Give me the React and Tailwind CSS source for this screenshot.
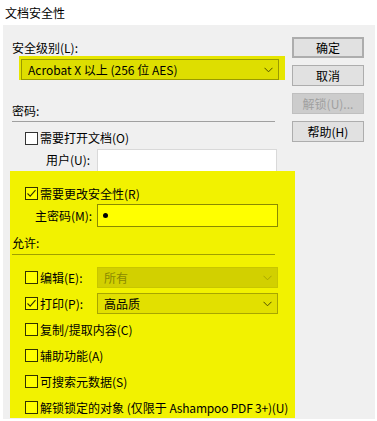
import React from "react";

const FONT = { fontFamily: '"Noto Sans CJK SC", "Noto Sans", sans-serif' };

function Chevron({ color = "#505000" }) {
  return (
    <svg width="9" height="6" viewBox="0 0 9 6" className="shrink-0">
      <polyline points="0.5,0.8 4.5,4.8 8.5,0.8" fill="none" stroke={color} strokeWidth="1" />
    </svg>
  );
}

function Check({ checked, bg = "bg-[#ffff00]", border = "border-[#333300]" }) {
  return (
    <div className={`w-[13px] h-[13px] border ${border} ${bg} shrink-0 flex items-center justify-center`}>
      {checked && (
        <svg width="11" height="11" viewBox="0 0 11 11">
          <polyline points="1.5,5.5 4.2,8.2 9.5,2.2" fill="none" stroke="#333300" strokeWidth="1.1" />
        </svg>
      )}
    </div>
  );
}

function CheckRow({ checked, label, className = "" }) {
  return (
    <div className={`flex items-center h-[21px] ${className}`}>
      <div className="ml-[15px]">
        <Check checked={checked} />
      </div>
      <span className="ml-[2px] leading-4 text-[12px] text-black">{label}</span>
    </div>
  );
}

function Button({ children, primary, disabled }) {
  return (
    <div
      className={`w-[72px] h-[21px] flex items-center justify-center text-[12px] leading-4 ${
        primary ? "border-2 border-[#0078d7]" : "border"
      } ${disabled ? "text-[#a0a0a0] bg-[#cccccc] border-[#bfbfbf]" : "text-black bg-[#e1e1e1] border-[#adadad]"}`}
    >
      {children}
    </div>
  );
}

export default function App() {
  return (
    <div className="w-[377px] h-[421px] bg-white overflow-hidden" style={FONT}>
      <div className="h-[25px] pl-[5px] pt-[5px] text-[12px] leading-4 text-black">文档安全性</div>
      <div className="ml-[3px] w-[372px] h-[394px] bg-[#f0f0f0] text-[12px] text-black">
        <div className="flex pt-[12px]">
          {/* left column */}
          <div className="w-[289px] shrink-0">
            <div className="mt-[3px] h-4 leading-4 pl-[9px]">安全级别(L):</div>
            <div className="ml-[16px] w-[266px] h-[24px] bg-[#e6e600] pt-[3px] pl-[2px]">
              <div className="w-[258px] h-[21px] border border-[#9a9a00] bg-[#dede00] flex items-center justify-between pl-[6px] pr-[5px]">
                <span className="leading-4">Acrobat X 以上 (256 位 AES)</span>
                <Chevron />
              </div>
            </div>
            <div className="mt-[23px] h-4 leading-4 pl-[9px]">密码:</div>
            <div className="mt-[2px] ml-[9px] w-[263px] h-px bg-[#a0a0a0]" />
            <div className="mt-[8px] flex items-center h-4">
              <div className="ml-[22px]">
                <Check checked={false} bg="bg-white" border="border-[#333333]" />
              </div>
              <span className="ml-[2px] leading-4">需要打开文档(O)</span>
            </div>
            <div className="mt-[3px] flex items-center h-[22px]">
              <span className="ml-[43px] w-[51px] leading-4">用户(U):</span>
              <div className="w-[180px] h-[22px] border border-[#d9d9d9] border-b-0 bg-white" />
            </div>
          </div>
          {/* right column buttons */}
          <div className="flex flex-col gap-[7px]">
            <Button primary>确定</Button>
            <Button>取消</Button>
            <Button disabled>解锁(U)...</Button>
            <Button>帮助(H)</Button>
          </div>
        </div>

        {/* highlighted permissions block */}
        <div className="ml-[7px] w-[285px] h-[247px] bg-[#f2f200]">
          <CheckRow checked label="需要更改安全性(R)" className="pt-[12px] h-[33px]" />
          <div className="flex items-center h-[23px]">
            <span className="ml-[25px] w-[62px] leading-4">主密码(M):</span>
            <div className="w-[181px] h-[23px] border border-[#8a8a00] bg-[#ffff00] flex items-center pl-[5px]">
              <div className="w-[5px] h-[5px] rounded-full bg-black" />
            </div>
          </div>
          <div className="mt-[8px] h-4 leading-4 pl-[2px]">允许:</div>
          <div className="mt-[3px] ml-[2px] w-[263px] h-px bg-[#a0a000]" />
          <div className="mt-[12px] flex flex-col gap-[5px]">
            <div className="flex items-center h-[21px]">
              <div className="ml-[15px]">
                <Check checked={false} />
              </div>
              <span className="ml-[2px] w-[57px] leading-4">编辑(E):</span>
              <div className="w-[181px] h-[21px] bg-[#d2d000] border border-[#c8c600] flex items-center justify-between pl-[6px] pr-[5px]">
                <span className="leading-4 text-[#8a8a00]">所有</span>
                <Chevron color="#a8a600" />
              </div>
            </div>
            <div className="flex items-center h-[21px]">
              <div className="ml-[15px]">
                <Check checked />
              </div>
              <span className="ml-[2px] w-[57px] leading-4">打印(P):</span>
              <div className="w-[181px] h-[21px] bg-[#e2e000] border border-[#a8a600] flex items-center justify-between pl-[6px] pr-[5px]">
                <span className="leading-4">高品质</span>
                <Chevron />
              </div>
            </div>
            <CheckRow label="复制/提取内容(C)" />
            <CheckRow label="辅助功能(A)" />
            <CheckRow label="可搜索元数据(S)" />
            <CheckRow label={<>解锁锁定的对象 (仅限于 <span className="tracking-[-0.2px]">Ashampoo PDF 3+)(U)</span></>} />
          </div>
        </div>
      </div>
    </div>
  );
}
